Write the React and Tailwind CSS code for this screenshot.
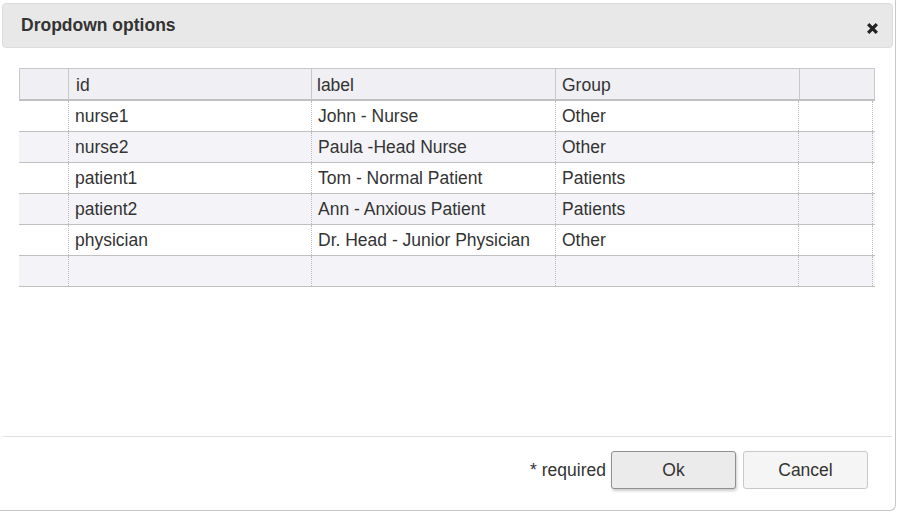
import React from "react";

const rows = [
  ["nurse1", "John - Nurse", "Other"],
  ["nurse2", "Paula -Head Nurse", "Other"],
  ["patient1", "Tom - Normal Patient", "Patients"],
  ["patient2", "Ann - Anxious Patient", "Patients"],
  ["physician", "Dr. Head - Junior Physician", "Other"],
  ["", "", ""],
];

export default function App() {
  return (
    <div className="w-[898px] h-[513px] bg-white relative overflow-hidden text-[#333]" style={{ fontFamily: '"Liberation Sans", Arial, sans-serif' }}>
      <div className="w-[896px] h-[511px] border-r border-b border-[#c8c8c8] rounded-br-[6px] bg-white flex flex-col">
        {/* header */}
        <div className="mt-[3px] ml-[2px] w-[891px] h-[45px] bg-[#e8e8e8] border border-[#dcdcdc] rounded-[4px] flex items-center justify-between pl-[18px] pr-[13px]">
          <span className="text-[17.5px] font-bold text-[#333] -mt-[1px]">Dropdown options</span>
          <svg width="13" height="13" viewBox="0 0 12 12" className="mt-[6px]">
            <path d="M2 2 L10 10 M10 2 L2 10" stroke="#222" strokeWidth="3" strokeLinecap="butt" />
          </svg>
        </div>
        {/* table */}
        <div className="mt-[20px] ml-[19px] w-[856px]">
          <div className="flex h-[33px] bg-[#efeff4] border-t border-l border-r border-[#c8c8c8] border-b-2 border-b-[#c0c0c0] text-[17.5px] pt-[3px]">
            <div className="w-[49px] border-r border-[#c8c8c8] -mt-[3px]"></div>
            <div className="w-[243px] border-r border-[#c8c8c8] pl-[7px] flex items-center -mt-[3px] pt-[3px]">id</div>
            <div className="w-[244px] border-r border-[#c8c8c8] pl-[5px] flex items-center -mt-[3px] pt-[3px]">label</div>
            <div className="w-[244px] border-r border-[#c8c8c8] pl-[6px] flex items-center -mt-[3px] pt-[3px]">Group</div>
            <div className="flex-1"></div>
          </div>
          {rows.map((r, i) => (
            <div key={i} className={`flex h-[31px] border-b border-[#c0c0c0] text-[17.5px] ${i % 2 === 1 ? "bg-[#f4f4f8]" : "bg-white"}`}>
              <div className="w-[50px] border-r border-dotted border-[#bbb]"></div>
              <div className="w-[243px] border-r border-dotted border-[#bbb] pl-[6px] flex items-center">{r[0]}</div>
              <div className="w-[244px] border-r border-dotted border-[#bbb] pl-[6px] flex items-center">{r[1]}</div>
              <div className="w-[243px] border-r border-dotted border-[#bbb] pl-[6px] flex items-center">{r[2]}</div>
              <div className="w-[74px] border-r border-dotted border-[#bbb]"></div>
            </div>
          ))}
        </div>
        <div className="flex-1"></div>
        {/* footer */}
        <div className="ml-[3px] w-[889px] border-t border-[#e0e0e0] h-[74px] flex items-start justify-end pr-[24px] pt-[14px] gap-[5px]">
          <span className="text-[17.5px] mt-[6px]">* required</span>
          <button className="w-[125px] h-[38px] bg-[#ebebeb] border border-[#8f8f8f] rounded-[3px] text-[17.5px] text-[#333] shadow-[1px_2px_3px_rgba(0,0,0,0.2)]">Ok</button>
          <button className="ml-[2px] w-[125px] h-[38px] bg-[#f5f5f5] border border-[#c8c8c8] rounded-[3px] text-[17.5px] text-[#333]">Cancel</button>
        </div>
      </div>
    </div>
  );
}
